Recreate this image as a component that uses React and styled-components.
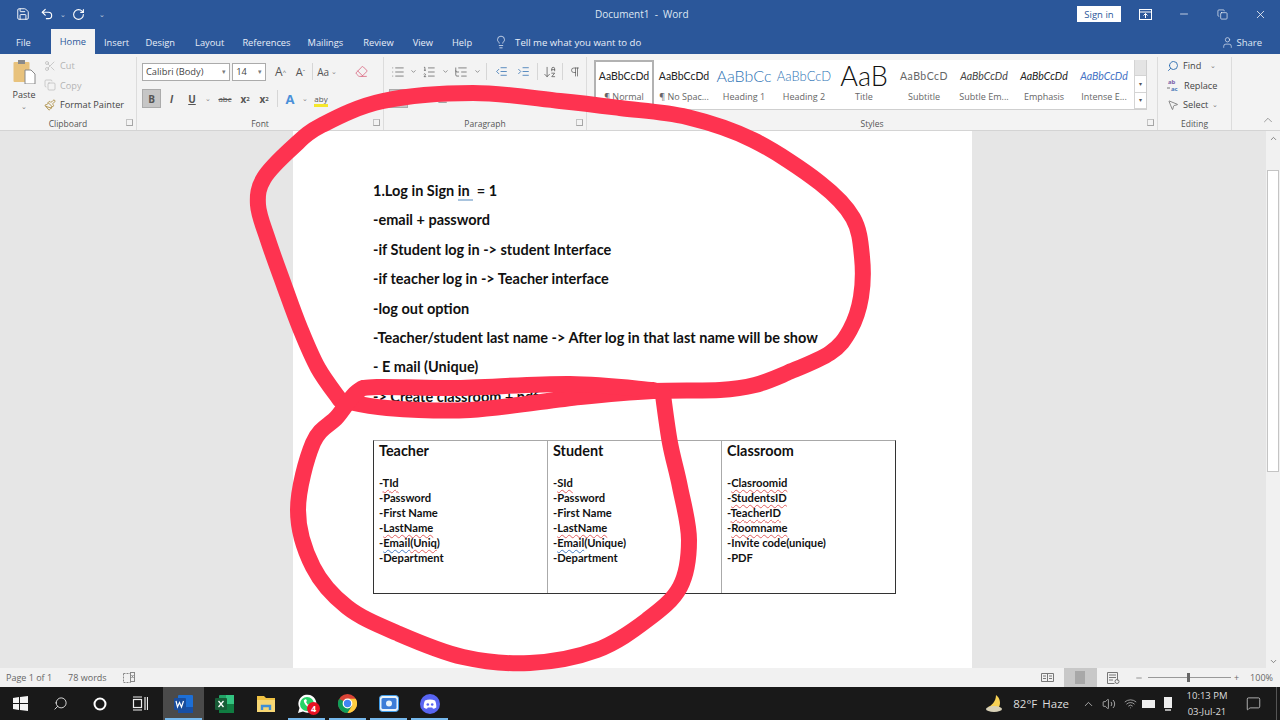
import React from 'react';
import styled, { createGlobalStyle } from 'styled-components';
import {
  Save, Undo2, RotateCw, X, Minus, Copy as RestoreIcon, Lightbulb, User, Scissors, Copy,
  Paintbrush, ChevronDown, ChevronUp, Search, MousePointer2, Pilcrow, Eraser,
  ArrowDownAZ, List, ListOrdered, ListTree, IndentDecrease, IndentIncrease, AlignLeft,
  AlignCenter, AlignRight, Volume2, Wifi, MessageSquare,
} from 'lucide-react';

const GlobalStyle = createGlobalStyle`
html, body {
  margin: 0;
  padding: 0;
  width: 1280px;
  height: 720px;
  overflow: hidden;
  background: #e6e6e6;
  font-family: "Open Sans", "Liberation Sans", sans-serif;
}
`;

const Screen = styled.div`
position: relative;
width: 1280px;
height: 720px;
display: flex;
flex-direction: column;
overflow: hidden;
`;

/* title bar + tabs */
const TitleBar = styled.div`
height: 28px;
background: #2b579a;
display: flex;
align-items: center;
color: #fff;
`;

const QuickAccess = styled.div`
width: 560px;
display: flex;
align-items: center;
padding-left: 11px;
box-sizing: border-box;
`;

const QuickSlot = styled.div`
width: ${p => p.$w ?? 24}px;
display: flex;
justify-content: center;
align-items: center;
`;

const Chev = styled.span`
font-size: 7px;
opacity: .7;
`;

const DocTitle = styled.div`
flex: 1;
font-size: 10px;
color: #dfe7f3;
padding-left: 35px;
`;

const SignIn = styled.div`
width: 44px;
height: 16px;
background: #fff;
color: #2b579a;
font-size: 9.5px;
display: flex;
align-items: center;
justify-content: center;
margin-right: 5px;
`;

const WinButton = styled.div`
width: 38.5px;
display: flex;
justify-content: center;
`;

const TabBar = styled.div`
height: 26px;
background: #2b579a;
display: flex;
align-items: flex-end;
color: #e8eef8;
font-size: 9.3px;
padding-left: 16px;
`;

const Tab = styled.div`
height: ${p => (p.$active ? '25px' : '24px')};
display: flex;
align-items: center;
justify-content: center;
margin-right: ${p => p.$gap ?? 18}px;
padding: ${p => (p.$active ? '0 9px' : '0')};
background: ${p => (p.$active ? '#f3f3f3' : 'transparent')};
color: ${p => (p.$active ? '#2b579a' : '#e8eef8')};
`;

const TellMe = styled.div`
display: flex;
align-items: center;
gap: 7px;
height: 24px;
font-size: 9.6px;
`;

const Share = styled.div`
margin-left: auto;
height: 24px;
display: flex;
align-items: center;
gap: 2px;
margin-right: 18px;
color: #dfe7f3;
font-size: 9.5px;
`;

/* ribbon */
const Ribbon = styled.div`
height: 77px;
background: #f3f3f3;
border-bottom: 1px solid #d4d4d4;
box-sizing: border-box;
display: flex;
position: relative;
color: #444;
font-size: 9.2px;
`;

const Group = styled.div`
width: ${p => p.$w}px;
flex: none;
box-sizing: border-box;
border-right: 1px solid #dcdcdc;
margin-top: 3px;
display: flex;
flex-direction: column;
position: relative;
`;

const GroupBody = styled.div`
flex: 1;
display: flex;
flex-direction: column;
padding: 5px 0 0 5px;
gap: 8px;
min-height: 0;
`;

const GroupLabel = styled.div`
height: 13px;
margin-top: auto;
flex: none;
text-align: center;
font-size: 8.5px;
color: #555;
line-height: 14px;
`;

const Launcher = styled.span`
position: absolute;
right: 3px;
bottom: 4px;
width: 5px;
height: 5px;
border: 1px solid #a5a5a5;
border-top-color: #c4c4c4;
border-left-color: #c4c4c4;
`;

const ClipWrap = styled.div`
flex: 1;
min-height: 0;
display: flex;
padding-left: 9px;
`;

const PasteCol = styled.div`
width: 30px;
padding-top: 3px;
display: flex;
flex-direction: column;
align-items: center;
font-size: 9px;
color: #444;
line-height: 12px;
`;

const PasteLabel = styled.div`
margin-top: 5px;
`;

const ClipCol = styled.div`
display: flex;
flex-direction: column;
margin-left: 5px;
gap: 2.5px;
`;

const ClipItem = styled.div`
height: 17px;
display: flex;
align-items: center;
gap: 4px;
white-space: nowrap;
color: ${p => (p.$off ? '#b4b4b4' : '#444')};
`;

const Row = styled.div`
display: flex;
align-items: center;
height: 19px;
`;

const Combo = styled.div`
width: ${p => p.$w}px;
height: 18px;
box-sizing: border-box;
background: #fff;
border: 1px solid #ababab;
margin-right: ${p => p.$gap ?? 2}px;
padding: 0 3px;
font-size: 9.3px;
display: flex;
align-items: center;
justify-content: space-between;
color: #444;
`;

const Tool = styled.div`
width: ${p => p.$w ?? 20}px;
height: 19px;
flex: none;
box-sizing: border-box;
display: flex;
align-items: center;
justify-content: center;
color: ${p => p.$color || '#555'};
font-size: ${p => p.$size ?? 10}px;
font-weight: ${p => (p.$bold ? 700 : 400)};
font-style: ${p => (p.$italic ? 'italic' : 'normal')};
text-decoration: ${p => p.$deco || 'none'};
background: ${p => (p.$active ? '#c6c6c6' : 'transparent')};
border: ${p => (p.$active ? '1px solid #ababab' : '0')};
`;

const Highlight = styled(Tool)`
position: relative;
&::after {
  content: '';
  position: absolute;
  left: 3px;
  right: 3px;
  bottom: 1px;
  height: 3px;
  background: #f5e72c;
}
`;

const Small = styled.span`
font-size: 6px;
vertical-align: ${p => (p.$up ? 'super' : 'sub')};
`;

const Sep = styled.div`
width: 1px;
height: 17px;
background: #d6d6d6;
margin: 0 ${p => p.$m ?? 5}px;
`;

const Gallery = styled.div`
margin: 3px 0 0 7px;
width: 552px;
height: 49px;
background: #fff;
border-bottom: 1px solid #cfcfcf;
border-right: 1px solid #cfcfcf;
display: flex;
`;

const StyleCard = styled.div`
width: 60px;
flex: none;
box-sizing: border-box;
display: flex;
flex-direction: column;
align-items: center;
border: ${p => (p.$selected ? '2px solid #b2b2b2' : '2px solid transparent')};
overflow: hidden;
`;

const StylePreview = styled.div`
height: 27px;
display: flex;
align-items: center;
white-space: nowrap;
font-family: "Lato", "Liberation Sans", sans-serif;
font-size: ${p => p.$size ?? 10.5}px;
color: ${p => p.$color || '#222'};
font-style: ${p => (p.$italic ? 'italic' : 'normal')};
font-weight: ${p => p.$weight ?? 400};
letter-spacing: ${p => p.$track ?? 0}px;
`;

const StyleName = styled.div`
font-size: 9px;
color: #666;
white-space: nowrap;
line-height: 13px;
margin-top: 1px;
`;

const GalleryScroll = styled.div`
margin-left: auto;
width: 12px;
border-left: 1px solid #d4d4d4;
display: flex;
flex-direction: column;
`;

const ScrollCell = styled.div`
flex: 1;
display: flex;
align-items: center;
justify-content: center;
background: ${p => (p.$off ? '#e4e4e4' : '#fff')};
border-bottom: 1px solid #d4d4d4;
color: #555;
font-size: 6px;
`;

const EditCol = styled.div`
flex: 1;
min-height: 0;
padding-left: 9px;
display: flex;
flex-direction: column;
gap: 2.5px;
`;

const Collapse = styled.div`
position: absolute;
right: 5px;
bottom: 0;
color: #777;
`;

/* document */
const DocArea = styled.div`
flex: 1;
background: #e6e6e6;
display: flex;
min-height: 0;
`;

const PageWrap = styled.div`
flex: 1;
display: flex;
justify-content: center;
padding-right: 1px;
overflow: hidden;
`;

const Page = styled.div`
width: 679px;
flex: none;
box-sizing: border-box;
background: #fff;
padding: 49px 76px 0 80px;
font-family: "Lato", "Carlito", "Liberation Sans", sans-serif;
color: #111;
`;

const Para = styled.p`
margin: 0;
height: 29.4px;
line-height: 22px;
font-size: 14.5px;
font-weight: 700;
white-space: nowrap;
`;

const Marked = styled.span`
border-bottom: 2px solid #a9c4de;
`;

const SpecTable = styled.div`
margin-top: 25px;
height: 154px;
box-sizing: border-box;
display: grid;
grid-template-columns: 173px 174px 174px;
border: 1px solid #333;
border-top-color: #a8a8a8;
`;

const SpecCell = styled.div`
padding: 1px 5px;
border-left: ${p => (p.$first ? '0' : '1.5px solid #aaa')};
`;

const SpecHead = styled.div`
font-size: 14.4px;
font-weight: 700;
line-height: 18px;
height: 33px;
`;

const SpecLine = styled.div`
font-size: 11.2px;
font-weight: 700;
line-height: 15px;
white-space: nowrap;
`;

const Squiggle = styled.span`
text-decoration: underline wavy ${p => (p.$blue ? '#4a7cc0' : '#e06060')} 1px;
text-underline-offset: 2px;
`;

const VScroll = styled.div`
width: 14px;
background: #f1f1f1;
display: flex;
flex-direction: column;
align-items: center;
color: #666;
`;

const VEnd = styled.div`
height: 14px;
display: flex;
align-items: center;
justify-content: center;
margin-top: ${p => (p.$bottom ? 'auto' : '0')};
`;

const VThumb = styled.div`
width: 12px;
height: 302px;
margin-top: 25px;
background: #fff;
border: 1px solid #c4c4c4;
box-sizing: border-box;
`;

/* status bar */
const StatusBar = styled.div`
height: 19px;
background: #f1f1f1;
display: flex;
align-items: center;
font-size: 9px;
color: #666;
padding-left: 6px;
`;

const StatusText = styled.span`
margin-right: 16px;
`;

const StatusRight = styled.div`
margin-left: auto;
display: flex;
align-items: center;
height: 100%;
`;

const ViewBtn = styled.div`
width: 33px;
height: 19px;
display: flex;
align-items: center;
justify-content: center;
background: ${p => (p.$active ? '#c8c8c8' : 'transparent')};
color: #777;
`;

const ZoomTrack = styled.div`
width: 83px;
height: 1px;
background: #999;
margin: 0 3px 0 5px;
position: relative;
`;

const ZoomThumb = styled.div`
position: absolute;
left: 39px;
top: -4px;
width: 3px;
height: 9px;
background: #666;
`;

const ZoomValue = styled.span`
margin: 0 7px 0 11px;
`;

/* taskbar */
const Taskbar = styled.div`
height: 33px;
background: #191919;
display: flex;
align-items: stretch;
color: #eee;
`;

const TaskCell = styled.div`
width: ${p => p.$w ?? 41}px;
flex: none;
position: relative;
display: flex;
align-items: center;
justify-content: center;
padding-right: ${p => p.$shift ?? 0}px;
box-sizing: border-box;
background: ${p => (p.$active ? '#4a4a4a' : 'transparent')};
&::after {
  content: '';
  display: ${p => (p.$open ? 'block' : 'none')};
  position: absolute;
  left: 2px;
  right: 2px;
  bottom: 0;
  height: 2px;
  background: #76b9ed;
}
`;

const Badge = styled.span`
position: absolute;
right: 7px;
top: 15px;
width: 13px;
height: 13px;
border-radius: 50%;
background: #e81123;
color: #fff;
font-size: 9px;
font-weight: 700;
display: flex;
align-items: center;
justify-content: center;
`;

const Tray = styled.div`
margin-left: auto;
display: flex;
align-items: center;
font-size: 11.5px;
color: #ddd;
`;

const Weather = styled.span`
margin: 0 13px 0 7px;
word-spacing: 2px;
white-space: nowrap;
`;

const Clock = styled.div`
width: 56px;
margin-left: 2px;
text-align: center;
font-size: 9.5px;
line-height: 16px;
`;

const ShowDesktop = styled.div`
width: 1px;
height: 33px;
margin: 0 3px 0 5px;
background: #555;
`;

const Scribble = styled.svg`
position: absolute;
left: 0;
top: 0;
pointer-events: none;
`;

const tabs = [
  ['Insert', 16.5], ['Design', 20], ['Layout', 18], ['References', 17],
  ['Mailings', 20], ['Review', 19], ['View', 19], ['Help', 22],
];

const galleryStyles = [
  { name: '¶ Normal', selected: true, sample: 'AaBbCcDd' },
  { name: '¶ No Spac...', sample: 'AaBbCcDd' },
  { name: 'Heading 1', sample: 'AaBbCc', size: 16, color: '#2e74b5', weight: 300 },
  { name: 'Heading 2', sample: 'AaBbCcD', size: 13, color: '#2e74b5', weight: 300 },
  { name: 'Title', sample: 'AaB', size: 27, color: '#111', weight: 300 },
  { name: 'Subtitle', sample: 'AaBbCcD', color: '#666', track: 0.5 },
  { name: 'Subtle Em...', sample: 'AaBbCcDd', italic: true, color: '#444' },
  { name: 'Emphasis', sample: 'AaBbCcDd', italic: true },
  { name: 'Intense E...', sample: 'AaBbCcDd', italic: true, color: '#4472c4' },
];

const mark = t => <Squiggle>{t}</Squiggle>;

const columns = [
  {
    head: 'Teacher',
    lines: [
      <>-{mark('TId')}</>, '-Password', '-First Name', <>-{mark('LastName')}</>,
      <>-<Squiggle $blue>Email</Squiggle>{mark('(Uniq')})</>, '-Department',
    ],
  },
  {
    head: 'Student',
    lines: [
      <>-{mark('SId')}</>, '-Password', '-First Name', <>-{mark('LastName')}</>,
      <>-<Squiggle $blue>Email</Squiggle>(Unique)</>, '-Department',
    ],
  },
  {
    head: 'Classroom',
    lines: [
      <>-{mark('Clasroomid')}</>, <>-{mark('StudentsID')}</>, <>-{mark('TeacherID')}</>,
      <>-{mark('Roomname')}</>, '-Invite code(unique)', '-PDF',
    ],
  },
];

// centre lines of the two marker strokes, read off the reference
const upperLoop = [
  [340, 400], [318, 368], [300, 328], [284, 285], [268, 240], [258, 205], [264, 178], [293, 147],
  [322, 125], [383, 101], [473, 93], [560, 101], [620, 108], [687, 117], [753, 140], [820, 183],
  [853, 218], [862, 257], [861, 297], [850, 330], [830, 353], [787, 373], [755, 385], [720, 390],
  [653, 391], [580, 397], [470, 410], [387, 408], [340, 400],
];

const lowerLoop = [
  [653, 390], [570, 384], [453, 388], [377, 387], [357, 392], [337, 417], [313, 443], [298, 510],
  [313, 567], [347, 607], [397, 633], [463, 657], [530, 663], [597, 650], [647, 620], [680, 587],
  [689, 540], [680, 487], [670, 443], [663, 395],
];

const smooth = pts => {
  let d = `M${pts[0][0]} ${pts[0][1]}`;
  for (let i = 0; i < pts.length - 1; i++) {
    const p0 = pts[i - 1] || pts[i];
    const p1 = pts[i];
    const p2 = pts[i + 1];
    const p3 = pts[i + 2] || p2;
    const c1 = [p1[0] + (p2[0] - p0[0]) / 6, p1[1] + (p2[1] - p0[1]) / 6];
    const c2 = [p2[0] - (p3[0] - p1[0]) / 6, p2[1] - (p3[1] - p1[1]) / 6];
    d += `C${c1[0]} ${c1[1]} ${c2[0]} ${c2[1]} ${p2[0]} ${p2[1]}`;
  }
  return d;
};

const ClipboardIcon = () => (
  <svg width="23" height="24" viewBox="0 0 23 24">
    <rect x="0.500" y="2" width="16" height="20" rx="1" fill="#e8c27c" />
    <rect x="5" y="0" width="7" height="4" fill="#8a8a8a" />
    <path d="M12 10h6l4 4v10H12z" fill="#fff" stroke="#888" />
  </svg>
);

const ReplaceIcon = () => (
  <svg width="13" height="14" viewBox="0 0 13 14" fontFamily="Open Sans" fontSize="6">
    <text x="1" y="6" fill="#7a5ea8" fontWeight="700">ab</text>
    <text x="4" y="13" fill="#4a78b8" fontWeight="700">ac</text>
    <path d="M0 10h3" stroke="#777" />
  </svg>
);

const PresentIcon = () => (
  <svg width="13" height="11" viewBox="0 0 13 11" fill="none" stroke="#fff">
    <rect x="0.500" y="0.500" width="12" height="10" />
    <path d="M0 3h13M6.500 9V4.500M4.500 6.500l2-2 2 2" />
  </svg>
);

const ProofIcon = () => (
  <svg width="12" height="11" viewBox="0 0 12 11" fill="none" stroke="#888">
    <rect x="0.500" y="1.500" width="7" height="9" strokeDasharray="2 1" />
    <rect x="7.500" y="0.500" width="4" height="9" />
    <path d="M8.500 3l2 3M10.500 3l-2 3" />
  </svg>
);

const PrintLayoutIcon = () => (
  <svg width="12" height="13" viewBox="0 0 12 13">
    <rect x="1" y="0" width="10" height="13" fill="#a8a8a8" />
  </svg>
);

const ReadIcon = () => (
  <svg width="13" height="11" viewBox="0 0 13 11" fill="none" stroke="#777">
    <path d="M6.500 1v9M0.500 1.500h12v8h-12zM2 4h3M8 4h3M2 6.500h3M8 6.500h3" />
  </svg>
);

const WebIcon = () => (
  <svg width="13" height="12" viewBox="0 0 13 12" fill="none" stroke="#777">
    <path d="M0.500 0.500h10v8M0.500 0.500v11h7M2 3h7M2 5.500h7M2 8h4" />
    <circle cx="10" cy="9.500" r="2" />
  </svg>
);

const WindowsLogo = () => (
  <svg width="15" height="15" viewBox="0 0 15 15" fill="#f4f4f4">
    <path d="M0 2l6-1v6H0zM7 1l8-1v7H7zM0 8h6v6l-6-1zM7 8h8v7l-8-1z" />
  </svg>
);

const TaskViewIcon = () => (
  <svg width="16" height="15" viewBox="0 0 16 15" fill="none" stroke="#eee" strokeWidth="1.2">
    <rect x="1.500" y="3.500" width="8" height="8" />
    <path d="M1 1h9M1 14h9M13 1v13M15.500 1v13" />
  </svg>
);

const WordIcon = () => (
  <svg width="20" height="20" viewBox="0 0 20 20">
    <rect x="4" y="1" width="15" height="18" rx="1" fill="#1d6fd6" />
    <rect x="4" y="13" width="15" height="6" fill="#174fa5" />
    <rect x="0" y="4" width="12" height="12" rx="1" fill="#1a4d9c" />
    <path d="M2 7l1.500 6 2-4.500 2 4.500L9.500 7" fill="none" stroke="#fff" strokeWidth="1.200" />
  </svg>
);

const ExcelIcon = () => (
  <svg width="20" height="20" viewBox="0 0 20 20">
    <rect x="4" y="1" width="15" height="18" rx="1" fill="#21a366" />
    <rect x="11" y="1" width="8" height="9" fill="#33c481" />
    <rect x="4" y="10" width="15" height="9" fill="#107c41" />
    <rect x="0" y="4" width="12" height="12" rx="1" fill="#185c37" />
    <path d="M3.500 7l5 6M8.500 7l-5 6" stroke="#fff" strokeWidth="1.300" />
  </svg>
);

const FolderIcon = () => (
  <svg width="20" height="18" viewBox="0 0 20 18">
    <path d="M1 1h7l2 2h9v14H1z" fill="#f0c243" />
    <rect x="1" y="5" width="18" height="12" fill="#f7d774" />
    <path d="M6 15v-4h8v4" fill="none" stroke="#3f8fd6" strokeWidth="2.400" />
  </svg>
);

const WhatsappIcon = () => (
  <svg width="20" height="20" viewBox="0 0 20 20">
    <path d="M1 19l1.500-5A9 9 0 1 1 6 17.500z" fill="#fff" />
    <circle cx="10" cy="10" r="7" fill="#25d366" />
    <path d="M7 6c-1 2 3 8 6 7l1-2-2-1-1 1-2-3 1-1-1-2z" fill="#fff" />
  </svg>
);

const ChromeIcon = () => (
  <svg width="19" height="19" viewBox="0 0 20 20">
    <circle cx="10" cy="10" r="10" fill="#db4437" />
    <path d="M10 10L1.300 5A10 10 0 0 0 10 20l5-8z" fill="#0f9d58" />
    <path d="M10 10l5 2-5 8A10 10 0 0 0 18.700 5H10z" fill="#ffcd40" />
    <circle cx="10" cy="10" r="4.500" fill="#4285f4" stroke="#fff" strokeWidth="1.300" />
  </svg>
);

const CameraIcon = () => (
  <svg width="20" height="17" viewBox="0 0 20 17">
    <rect x="0.500" y="0.500" width="19" height="16" rx="3" fill="#e9f3fb" stroke="#3d9be9" />
    <rect x="2.500" y="3" width="15" height="11" rx="1.500" fill="#3d7dd8" />
    <circle cx="10" cy="8.500" r="3" fill="#e9f3fb" />
  </svg>
);

const DiscordIcon = () => (
  <svg width="20" height="20" viewBox="0 0 20 20">
    <circle cx="10" cy="10" r="10" fill="#5865f2" />
    <path d="M5 6.500c3-1.500 7-1.500 10 0 1 2 1.500 4.500 1.300 7-1.200.8-2.300 1.200-3.300 1.300l-.8-1.300H7.800L7 14.800c-1-.1-2.100-.5-3.300-1.300C3.500 11 4 8.500 5 6.500z" fill="#fff" />
    <circle cx="7.800" cy="10.500" r="1.300" fill="#5865f2" />
    <circle cx="12.200" cy="10.500" r="1.300" fill="#5865f2" />
  </svg>
);

const MoonIcon = () => (
  <svg width="20" height="18" viewBox="0 0 20 18">
    <path d="M10 0c4 3 5 8 3 12H2c3-1 8-5 8-12z" fill="#f7d154" />
    <ellipse cx="8" cy="14" rx="8" ry="3" fill="#d9d2b8" />
  </svg>
);

const App = () => (
  <Screen>
    <GlobalStyle />
    <TitleBar>
      <QuickAccess>
        <QuickSlot><Save size={14} strokeWidth={1.6} /></QuickSlot>
        <QuickSlot><Undo2 size={14} strokeWidth={2} /></QuickSlot>
        <QuickSlot $w={7}><Chev>⌄</Chev></QuickSlot>
        <QuickSlot><RotateCw size={13} strokeWidth={2} /></QuickSlot>
        <QuickSlot><Chev>⌄</Chev></QuickSlot>
      </QuickAccess>
      <DocTitle>Document1&nbsp; -&nbsp; Word</DocTitle>
      <SignIn>Sign in</SignIn>
      <WinButton><PresentIcon /></WinButton>
      <WinButton><Minus size={12} strokeWidth={1.4} /></WinButton>
      <WinButton><RestoreIcon size={11} strokeWidth={1.4} /></WinButton>
      <WinButton><X size={13} strokeWidth={1.4} /></WinButton>
    </TitleBar>
    <TabBar>
      <Tab $gap={20}>File</Tab>
      <Tab $active $gap={9}>Home</Tab>
      {tabs.map(([label, gap]) => <Tab key={label} $gap={gap}>{label}</Tab>)}
      <TellMe>
        <Lightbulb size={14} strokeWidth={1.3} />
        Tell me what you want to do
      </TellMe>
      <Share><User size={13} strokeWidth={1.3} />Share</Share>
    </TabBar>
    <Ribbon>
      <Group $w={137}>
        <ClipWrap>
          <PasteCol>
            <ClipboardIcon />
            <PasteLabel>Paste</PasteLabel>
            <Chev>⌄</Chev>
          </PasteCol>
          <ClipCol>
            <ClipItem $off><Scissors size={12} strokeWidth={1.3} />Cut</ClipItem>
            <ClipItem $off><Copy size={12} strokeWidth={1.3} />Copy</ClipItem>
            <ClipItem><Paintbrush size={12} strokeWidth={1.6} color="#a5812f" />Format Painter</ClipItem>
          </ClipCol>
        </ClipWrap>
        <GroupLabel>Clipboard</GroupLabel>
        <Launcher />
      </Group>
      <Group $w={247}>
        <GroupBody>
          <Row>
            <Combo $w={95}>Calibri (Body)<Chev>▾</Chev></Combo>
            <Combo $w={36} $gap={4}>14<Chev>▾</Chev></Combo>
            <Tool $w={21} $size={12}>A<Small $up>^</Small></Tool>
            <Tool $w={19} $size={11}>A<Small $up>ˇ</Small></Tool>
            <Sep $m={2} />
            <Tool $w={24}>Aa<Chev>&nbsp;⌄</Chev></Tool>
            <Tool $w={44} $color="#d9637d"><Eraser size={13} strokeWidth={1.5} /></Tool>
          </Row>
          <Row>
            <Tool $w={19} $active $bold>B</Tool>
            <Tool $w={21} $italic $bold>I</Tool>
            <Tool $w={20} $bold $deco="underline">U</Tool>
            <Tool $w={12}><Chev>⌄</Chev></Tool>
            <Tool $w={22} $size={8} $deco="line-through">abc</Tool>
            <Tool $w={18} $bold>x<Small>2</Small></Tool>
            <Tool $w={20} $bold>x<Small $up>2</Small></Tool>
            <Sep $m={3} />
            <Tool $w={18} $color="#4a90d9" $size={13} $bold>A</Tool>
            <Tool $w={12}><Chev>⌄</Chev></Tool>
            <Highlight $w={20} $size={8}>aby</Highlight>
          </Row>
        </GroupBody>
        <GroupLabel>Font</GroupLabel>
        <Launcher />
      </Group>
      <Group $w={203}>
        <GroupBody>
          <Row>
            <Tool $w={18}><List size={14} strokeWidth={1.2} /></Tool>
            <Tool $w={12}><ChevronDown size={7} /></Tool>
            <Tool $w={20}><ListOrdered size={14} strokeWidth={1.2} /></Tool>
            <Tool $w={12}><ChevronDown size={7} /></Tool>
            <Tool $w={20}><ListTree size={14} strokeWidth={1.2} /></Tool>
            <Tool $w={12}><ChevronDown size={7} /></Tool>
            <Sep $m={3} />
            <Tool $w={22} $color="#2b6cb0"><IndentDecrease size={13} strokeWidth={1.4} /></Tool>
            <Tool $w={22} $color="#2b6cb0"><IndentIncrease size={13} strokeWidth={1.4} /></Tool>
            <Sep $m={3} />
            <Tool $w={18}><ArrowDownAZ size={14} strokeWidth={1.3} /></Tool>
            <Sep $m={3} />
            <Tool $w={18}><Pilcrow size={12} strokeWidth={1.4} /></Tool>
          </Row>
          <Row>
            <Tool $w={19} $active><AlignLeft size={13} strokeWidth={1.2} /></Tool>
            <Tool $w={22}><AlignCenter size={13} strokeWidth={1.2} /></Tool>
            <Tool $w={22}><AlignRight size={13} strokeWidth={1.2} /></Tool>
          </Row>
        </GroupBody>
        <GroupLabel>Paragraph</GroupLabel>
        <Launcher />
      </Group>
      <Group $w={571}>
        <Gallery>
          {galleryStyles.map(s => (
            <StyleCard key={s.name} $selected={s.selected}>
              <StylePreview $size={s.size} $color={s.color} $italic={s.italic} $weight={s.weight} $track={s.track}>
                {s.sample}
              </StylePreview>
              <StyleName>{s.name}</StyleName>
            </StyleCard>
          ))}
          <GalleryScroll>
            <ScrollCell $off />
            <ScrollCell>▾</ScrollCell>
            <ScrollCell>▾</ScrollCell>
          </GalleryScroll>
        </Gallery>
        <GroupLabel>Styles</GroupLabel>
        <Launcher />
      </Group>
      <Group $w={74}>
        <EditCol>
          <ClipItem><Search size={12} strokeWidth={1.8} color="#2b6cb0" style={{ transform: 'scaleX(-1)' }} />Find&nbsp;&nbsp;<Chev>⌄</Chev></ClipItem>
          <ClipItem><ReplaceIcon />Replace</ClipItem>
          <ClipItem><MousePointer2 size={12} strokeWidth={1.2} />Select<Chev>⌄</Chev></ClipItem>
        </EditCol>
        <GroupLabel>Editing</GroupLabel>
      </Group>
      <Collapse><ChevronUp size={14} strokeWidth={1.2} /></Collapse>
    </Ribbon>
    <DocArea>
      <PageWrap>
        <Page>
          <Para>1.Log in Sign <Marked>in&nbsp;</Marked>&nbsp;= 1</Para>
          <Para>-email + password</Para>
          <Para>-if Student log in -&gt; student Interface</Para>
          <Para>-if teacher log in -&gt; Teacher interface</Para>
          <Para>-log out option</Para>
          <Para>-Teacher/student last name -&gt; After log in that last name will be show</Para>
          <Para>- E mail (Unique)</Para>
          <Para>-&gt; Create classroom + pdf upload</Para>
          <SpecTable>
            {columns.map((col, i) => (
              <SpecCell key={col.head} $first={i === 0}>
                <SpecHead>{col.head}</SpecHead>
                {col.lines.map((line, j) => <SpecLine key={j}>{line}</SpecLine>)}
              </SpecCell>
            ))}
          </SpecTable>
        </Page>
      </PageWrap>
      <VScroll>
        <VEnd><ChevronUp size={9} /></VEnd>
        <VThumb />
        <VEnd $bottom><ChevronDown size={9} /></VEnd>
      </VScroll>
    </DocArea>
    <StatusBar>
      <StatusText>Page 1 of 1</StatusText>
      <StatusText>78 words</StatusText>
      <ProofIcon />
      <StatusRight>
        <ViewBtn><ReadIcon /></ViewBtn>
        <ViewBtn $active><PrintLayoutIcon /></ViewBtn>
        <ViewBtn><WebIcon /></ViewBtn>
        <Minus size={8} style={{ marginLeft: 5 }} />
        <ZoomTrack><ZoomThumb /></ZoomTrack>
        <span>+</span>
        <ZoomValue>100%</ZoomValue>
      </StatusRight>
    </StatusBar>
    <Taskbar>
      <TaskCell $w={40}><WindowsLogo /></TaskCell>
      <TaskCell $w={40}><Search size={15} strokeWidth={1.4} style={{ transform: 'scaleX(-1)' }} /></TaskCell>
      <TaskCell $w={40}>
        <svg width="14" height="14" viewBox="0 0 14 14"><circle cx="7" cy="7" r="5.500" fill="none" stroke="#fff" strokeWidth="2" /></svg>
      </TaskCell>
      <TaskCell $w={43} $shift={3}><TaskViewIcon /></TaskCell>
      <TaskCell $active $open><WordIcon /></TaskCell>
      <TaskCell><ExcelIcon /></TaskCell>
      <TaskCell><FolderIcon /></TaskCell>
      <TaskCell $open><WhatsappIcon /><Badge>4</Badge></TaskCell>
      <TaskCell $open><ChromeIcon /></TaskCell>
      <TaskCell $open><CameraIcon /></TaskCell>
      <TaskCell $open><DiscordIcon /></TaskCell>
      <Tray>
        <MoonIcon />
        <Weather>82°F Haze</Weather>
        <TaskCell $w={13}><ChevronUp size={14} strokeWidth={1.3} /></TaskCell>
        <TaskCell $w={27}><Volume2 size={14} strokeWidth={1.2} /></TaskCell>
        <TaskCell $w={17}><Wifi size={13} strokeWidth={1.2} /></TaskCell>
        <TaskCell $w={19}>
          <svg width="13" height="8" viewBox="0 0 13 8"><rect width="13" height="8" fill="#eee" /></svg>
        </TaskCell>
        <TaskCell $w={19}>
          <svg width="8" height="14" viewBox="0 0 8 14"><rect width="8" height="11" fill="#eee" /><rect x="1" y="12" width="6" height="2" fill="#aaa" /></svg>
        </TaskCell>
        <Clock>10:13 PM<br />03-Jul-21</Clock>
        <TaskCell $w={36}><MessageSquare size={15} strokeWidth={1.2} /></TaskCell>
        <ShowDesktop />
      </Tray>
    </Taskbar>
    <Scribble width="1280" height="720" viewBox="0 0 1280 720">
      <path d={smooth(upperLoop)} fill="none" stroke="#fe3350" strokeWidth="16" strokeLinecap="round" strokeLinejoin="round" />
      <path d={smooth(lowerLoop)} fill="none" stroke="#fe3350" strokeWidth="16" strokeLinecap="round" strokeLinejoin="round" />
    </Scribble>
  </Screen>
);

export default App;
